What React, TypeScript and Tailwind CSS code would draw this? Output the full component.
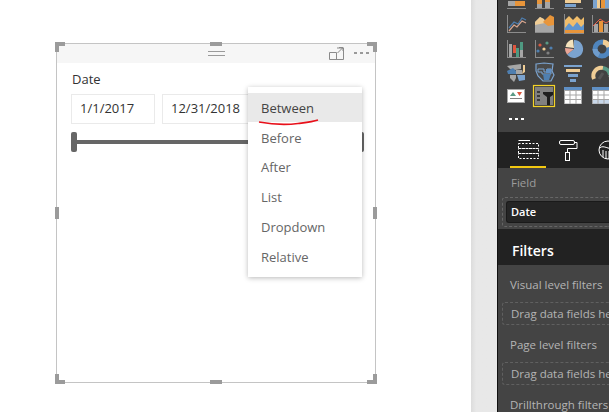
import type { ReactNode } from 'react'

const font = "[font-family:'Open_Sans','Noto_Sans',sans-serif]"

function Cell({ children }: { children: ReactNode }) {
  return (
    <svg width="20" height="20" viewBox="0 0 20 20" className="block overflow-visible">
      {children}
    </svg>
  )
}

function Axes({ full }: { full?: boolean }) {
  return (
    <>
      <rect x="0" y="18" width="19" height="1" fill="#8c8c8c" />
      {full && <rect x="0" y="1" width="1" height="18" fill="#8c8c8c" />}
    </>
  )
}

const galleryIcons: ReactNode[] = [
  // stacked bar
  <>
    <rect x="1" y="11" width="7" height="5" fill="#a6a6a6" />
    <rect x="8" y="11" width="10" height="5" fill="#e8953a" />
    <Axes />
  </>,
  // stacked column
  <>
    <rect x="2" y="10" width="5" height="4" fill="#e8953a" />
    <rect x="2" y="14" width="5" height="4" fill="#a6a6a6" />
    <rect x="10" y="8" width="5" height="4" fill="#e8953a" />
    <rect x="10" y="12" width="5" height="6" fill="#a6a6a6" />
    <Axes />
  </>,
  // clustered bar
  <>
    <rect x="1" y="10" width="16" height="3" fill="#f0cd95" />
    <rect x="1" y="14" width="11" height="3" fill="#7ba3cf" />
    <Axes />
  </>,
  // 100% column
  <>
    <rect x="1" y="8" width="4" height="10" fill="#7ba3cf" />
    <rect x="5" y="8" width="3" height="10" fill="#f0cd95" />
    <rect x="9" y="8" width="4" height="10" fill="#e8953a" />
    <rect x="13" y="8" width="4" height="10" fill="#7ba3cf" />
    <Axes />
  </>,
  // line
  <>
    <path d="M2 17L7 11L10 13L15 7L19 9" fill="none" stroke="#d7a58e" strokeWidth="1.2" />
    <path d="M2 14L7 8L11 10L15 4L19 6" fill="none" stroke="#4f7fb0" strokeWidth="1.2" />
    <Axes full />
  </>,
  // area
  <>
    <path d="M0 18V8L5 3L10 6L19 8V18Z" fill="#a6a6a6" />
    <path d="M0 8L5 3L9 5L10 9L0 11Z" fill="#f0cd95" />
    <path d="M8 8L15 1L19 3V11L13 12Z" fill="#e8953a" />
    <rect x="0" y="18" width="19" height="1" fill="#8c8c8c" />
  </>,
  // stacked area
  <>
    <path d="M1 19V6L5 2L9 6L13 2L17 6L20 3V19Z" fill="#f0bd6b" />
    <path d="M1 14L5 9L9 13L13 8L17 13L20 10V16H1Z" fill="#5f95cf" />
    <path d="M1 16H20V19H1Z" fill="#e8953a" />
    <rect x="0" y="0" width="1" height="20" fill="#8c8c8c" />
    <rect x="0" y="19" width="20" height="1" fill="#8c8c8c" />
  </>,
  // combo
  <>
    <rect x="2" y="10" width="4" height="8" fill="#a6a6a6" />
    <rect x="7" y="7" width="4" height="11" fill="#e8953a" />
    <rect x="12" y="10" width="4" height="8" fill="#a6a6a6" />
    <rect x="17" y="4" width="3" height="14" fill="#e8953a" />
    <path d="M1 12L8 5L14 9L19 6" fill="none" stroke="#e9604a" strokeWidth="1" />
    <Axes full />
  </>,
  // ribbon
  <>
    <rect x="2" y="5" width="3" height="13" fill="#a6a6a6" />
    <rect x="13" y="3" width="3" height="15" fill="#a6a6a6" />
    <rect x="6" y="6" width="3" height="8" fill="#e0573f" />
    <rect x="9" y="9" width="3" height="9" fill="#4f9a82" />
    <rect x="13" y="3" width="3" height="8" fill="#4f9a82" />
    <Axes full />
  </>,
  // scatter
  <>
    <circle cx="5" cy="6" r="1.6" fill="#d9583f" />
    <circle cx="12" cy="4" r="1.6" fill="#5a9a85" />
    <circle cx="3" cy="12" r="1.6" fill="#4f7fb0" />
    <circle cx="9" cy="10" r="1.6" fill="#f0cd95" />
    <circle cx="16" cy="9" r="1.6" fill="#4f7fb0" />
    <circle cx="13" cy="14" r="1.6" fill="#808080" />
    <Axes full />
  </>,
  // pie
  <>
    <path d="M10 10V1A9 9 0 1 1 3 15.5Z" fill="#7ba3cf" />
    <path d="M10 10L3 15.5A9 9 0 0 1 1 9Z" fill="#e9a596" />
    <path d="M10 9L1.5 8A9 9 0 0 1 9 0.5Z" fill="#f5e3bd" />
  </>,
  // donut
  <>
    <circle cx="10" cy="10" r="7" fill="none" stroke="#4f85bd" strokeWidth="5" />
    <path d="M11 3A7 7 0 0 1 17 8" fill="none" stroke="#f0cd95" strokeWidth="5" />
    <path d="M3 10A7 7 0 0 0 7 16" fill="none" stroke="#6f9ccc" strokeWidth="5" />
  </>,
  // map
  <>
    <path d="M0 3L14 1V6L8 7L3 6Z" fill="#a6a6a6" />
    <path d="M0 8L6 5L9 8V11H1Z" fill="#4f7fb0" />
    <path d="M9 7H15V11H9Z" fill="#a6a6a6" />
    <path d="M3 12H9V15L7 19L3 15Z" fill="#a6a6a6" />
    <path d="M10 12H18V17L12 18Z" fill="#7ba3cf" />
    <path d="M16 2H18V9L15 11L16 7Z" fill="#f0cd95" />
  </>,
  // filled map
  <>
    <path d="M1 1L9 0L18 1L17 8L19 12L16 18L8 18L3 13L1 8Z" fill="#4a4a4a" stroke="#7ba3cf" strokeWidth="1.2" />
    <path d="M3 6H9V9H12V6H16V11H7V9H3Z" fill="none" stroke="#7ba3cf" />
    <path d="M8 11H16L14 17H9Z" fill="#4f7fb0" />
    <rect x="11" y="6" width="5" height="4" fill="#5f8fc4" />
  </>,
  // funnel
  <>
    <rect x="0" y="2" width="18" height="2" fill="#7ba3cf" />
    <rect x="2" y="6" width="14" height="3" fill="#f0cd95" />
    <rect x="4" y="11" width="10" height="3" fill="#7ba3cf" />
    <rect x="6" y="16" width="6" height="3" fill="#7ba3cf" />
  </>,
  // gauge
  <>
    <path d="M2 16A8 8 0 0 1 11 5" fill="none" stroke="#f0cd95" strokeWidth="4" />
    <path d="M11 5A8 8 0 0 1 18 12" fill="none" stroke="#5a9a85" strokeWidth="4" />
    <path d="M18 12L20 16" stroke="#8c8c8c" strokeWidth="4" />
    <path d="M7 16L11 10" stroke="#555555" strokeWidth="3" />
  </>,
  // card
  <>
    <rect x="0.500" y="2.500" width="17" height="13" fill="#ffffff" stroke="#a6a6a6" />
    <path d="M3 9L6 5L9 9Z" fill="#5a9a85" />
    <path d="M10 5H15L12.500 9Z" fill="#d9583f" />
    <rect x="3" y="11" width="12" height="1" fill="#808080" />
  </>,
  // slicer, selected in the gallery
  <>
    <rect x="-1.500" y="-1.500" width="21" height="21" fill="#3f3f3f" stroke="#f5d327" strokeWidth="1.200" />
    <rect x="0" y="0" width="18" height="18" fill="#808080" />
    <rect x="2" y="4" width="3" height="2" fill="#3a3a3a" />
    <rect x="2" y="8" width="3" height="2" fill="#3a3a3a" />
    <rect x="2" y="12" width="3" height="2" fill="#3a3a3a" />
    <path d="M8 5H18V8L15 10V18H12V10L8 7Z" fill="#1d1d1d" />
  </>,
  // table
  <>
    <rect x="0" y="0" width="18" height="3" fill="#5f8fc4" />
    <rect x="0" y="3" width="18" height="14" fill="#a6a6a6" />
    <rect x="1" y="4" width="4.500" height="3.500" fill="#ffffff" />
    <rect x="6.500" y="4" width="5" height="3.500" fill="#ffffff" />
    <rect x="12.500" y="4" width="4.500" height="3.500" fill="#ffffff" />
    <rect x="1" y="8.500" width="4.500" height="3.500" fill="#ffffff" />
    <rect x="6.500" y="8.500" width="5" height="3.500" fill="#ffffff" />
    <rect x="12.500" y="8.500" width="4.500" height="3.500" fill="#ffffff" />
    <rect x="1" y="13" width="4.500" height="3.500" fill="#ffffff" />
    <rect x="6.500" y="13" width="5" height="3.500" fill="#ffffff" />
    <rect x="12.500" y="13" width="4.500" height="3.500" fill="#ffffff" />
  </>,
  // matrix
  <>
    <rect x="0" y="0" width="18" height="3" fill="#5f8fc4" />
    <rect x="0" y="3" width="18" height="14" fill="#a6a6a6" />
    <rect x="1" y="4" width="4.500" height="3.500" fill="#ffffff" />
    <rect x="6.500" y="4" width="5" height="3.500" fill="#ffffff" />
    <rect x="12.500" y="4" width="4.500" height="3.500" fill="#ffffff" />
    <rect x="1" y="8.500" width="4.500" height="3.500" fill="#ffffff" />
    <rect x="6.500" y="8.500" width="5" height="3.500" fill="#ffffff" />
    <rect x="12.500" y="8.500" width="4.500" height="3.500" fill="#ffffff" />
    <rect x="1" y="13" width="4.500" height="3.500" fill="#c9d8ea" />
    <rect x="6.500" y="13" width="5" height="3.500" fill="#c9d8ea" />
    <rect x="12.500" y="13" width="4.500" height="3.500" fill="#c9d8ea" />
  </>,
]

function FieldsIcon() {
  return (
    <svg width="21" height="20" viewBox="0 0 21 20" fill="none" stroke="#ffffff" strokeWidth="1" className="shrink-0">
      <path d="M0.500 0.500H12" />
      <rect x="0.500" y="3.500" width="20" height="5" strokeDasharray="2 1.500" />
      <rect x="0.500" y="8.500" width="20" height="5" strokeDasharray="2 1.500" />
      <rect x="0.500" y="13.500" width="20" height="5" strokeDasharray="2 1.500" />
    </svg>
  )
}

function RollerIcon() {
  return (
    <svg width="19" height="21" viewBox="0 0 19 21" fill="none" stroke="#ffffff" strokeWidth="1" className="shrink-0">
      <rect x="0.500" y="0.500" width="15" height="4" rx="1.500" />
      <path d="M15.500 2.500H18V8.500H8.500V12" />
      <rect x="6.500" y="12.500" width="4" height="8" />
    </svg>
  )
}

function AnalyticsIcon() {
  return (
    <svg width="20" height="20" viewBox="0 0 20 20" fill="none" stroke="#ffffff" strokeWidth="1" className="shrink-0">
      <circle cx="10" cy="10" r="9" />
      <path d="M1.500 8C6 4 11 11 18.500 8" />
      <path d="M5 10V17M8 11V19M11 11V19M14 10V17" />
    </svg>
  )
}

function Handle({ className }: { className: string }) {
  return <div className={`absolute bg-[#9b9b9b] ${className}`} />
}

function Corner({ className, h, v }: { className: string; h: string; v: string }) {
  return (
    <div className={`absolute h-[10px] w-[10px] ${className}`}>
      <div className={`absolute h-[4px] w-[10px] bg-[#9b9b9b] ${h}`} />
      <div className={`absolute h-[10px] w-[4px] bg-[#9b9b9b] ${v}`} />
    </div>
  )
}

function DateBox({ value, className }: { value: string; className: string }) {
  return (
    <div className={`flex h-[30px] items-center border border-[#eaeaea] pl-[8px] text-[13px] text-[#333333] ${className}`}>
      {value}
    </div>
  )
}

function DropZone() {
  return (
    <div className="mt-[7px] flex h-[23px] items-center overflow-hidden whitespace-nowrap rounded-l-[3px] border border-r-0 border-dashed border-[#606060] pl-[8px] text-[11.500px] text-[#b4b4b4]">
      Drag data fields here
    </div>
  )
}

const menuItems = ['Before', 'After', 'List', 'Dropdown', 'Relative']

export default function App() {
  return (
    <div className={`flex h-[412px] w-[609px] overflow-hidden bg-white ${font}`}>
      {/* Report canvas */}
      <div className="w-[471px] shrink-0 pl-[56px] pt-[43px]">
        <div className="relative h-[340px] w-[320px] border border-[#c4c4c4]">
          <Corner className="-left-[2px] -top-[2px]" h="left-0 top-0" v="left-0 top-0" />
          <Corner className="-right-[2px] -top-[2px]" h="right-0 top-0" v="right-0 top-0" />
          <Corner className="-bottom-[2px] -left-[2px]" h="bottom-0 left-0" v="bottom-0 left-0" />
          <Corner className="-bottom-[2px] -right-[2px]" h="bottom-0 right-0" v="bottom-0 right-0" />
          <Handle className="-top-[2px] left-[153px] h-[4px] w-[12px]" />
          <Handle className="-bottom-[2px] left-[153px] h-[4px] w-[12px]" />
          <Handle className="-left-[2px] top-[163px] h-[12px] w-[4px]" />
          <Handle className="-right-[2px] top-[163px] h-[12px] w-[4px]" />

          {/* Visual header */}
          <div className="flex h-[19px] items-center justify-center bg-[#f6f6f6]">
            <div className="flex w-[17px] flex-col gap-[3px]">
              <div className="h-px bg-[#9a9a9a]" />
              <div className="h-px bg-[#9a9a9a]" />
            </div>
          </div>
          <svg width="15" height="13" viewBox="0 0 15 13" fill="none" stroke="#8a8a8a" className="absolute left-[272px] top-[3px]">
            <path d="M0.500 5.500V12.500H14.500V1H8M0.500 5.500H7.500V12.500M8.500 6L13.500 1M10 0.500H14M14 0.500V4" />
          </svg>
          <div className="absolute left-[297px] top-[8px] flex gap-[3px]">
            <div className="h-[2px] w-[3px] bg-[#999999]" />
            <div className="h-[2px] w-[3px] bg-[#999999]" />
            <div className="h-[2px] w-[3px] bg-[#999999]" />
          </div>

          {/* Slicer */}
          <div className="pl-[14px] pt-[6px]">
            <div className="pl-px text-[13px] leading-[20px] text-[#333333]">Date</div>
            <div className="mt-[5px] flex gap-[7px]">
              <DateBox value="1/1/2017" className="w-[84px]" />
              <DateBox value="12/31/2018" className="w-[100px]" />
            </div>
            <div className="mt-[8px] flex h-[20px] w-[293px] items-center">
              <div className="h-[20px] w-[6px] shrink-0 rounded-[2px] bg-[#666666]" />
              <div className="h-[4px] flex-1 bg-[#666666]" />
              <div className="h-[20px] w-[6px] shrink-0 rounded-[2px] bg-[#666666]" />
            </div>
          </div>

          {/* Slicer type menu */}
          <div className="absolute left-[191px] top-[43px] h-[190px] w-[114px] bg-white pt-[6px] shadow-[0_1px_5px_rgba(0,0,0,0.28)]">
            <div className="flex h-[29px] items-center bg-[#e9e9e9] pl-[13px] pt-[2px] text-[13px] text-[#444444]">Between</div>
            <div className="pt-[1.500px]">
              {menuItems.map((item) => (
                <div key={item} className="flex h-[29.750px] items-center pl-[13px] text-[13px] text-[#666666]">
                  {item}
                </div>
              ))}
            </div>
          </div>
          <svg width="62" height="8" viewBox="0 0 62 8" fill="none" className="absolute left-[201px] top-[74px]">
            <path d="M1 4C12 6 28 7 40 5.500C48 4.500 54 4 60 2" stroke="#e8101a" strokeWidth="1.600" />
          </svg>
        </div>
      </div>

      {/* Gap between canvas and pane */}
      <div className="w-[26px] shrink-0 bg-gradient-to-r from-[#dcdcdc] to-[#e8e8e8] to-[20%]" />

      {/* Visualizations pane */}
      <div className="w-[112px] shrink-0 border-l border-[#111111] bg-[#424242]">
        <div className="h-[132px] overflow-hidden">
          <div className="-mt-[10px] grid grid-cols-[repeat(4,20px)] gap-x-[8.300px] gap-y-[4.250px] pl-[9px]">
            {galleryIcons.map((icon, i) => (
              <Cell key={i}>{icon}</Cell>
            ))}
          </div>
          <div className="ml-[11px] mt-[11px] flex gap-[3px]">
            <div className="h-[2px] w-[3px] bg-white" />
            <div className="h-[2px] w-[3px] bg-white" />
            <div className="h-[2px] w-[3px] bg-white" />
          </div>
        </div>

        {/* Tabs */}
        <div className="h-[36px] bg-[#222222]">
          <div className="flex h-full">
            <div className="ml-[12px] flex h-full w-[36px] shrink-0 justify-center border-b-2 border-[#f2c811] pt-[8px]">
              <FieldsIcon />
            </div>
            <div className="ml-[13px] shrink-0 pt-[8px]">
              <RollerIcon />
            </div>
            <div className="ml-[20px] shrink-0 pt-[8px]">
              <AnalyticsIcon />
            </div>
          </div>
        </div>

        {/* Field well */}
        <div className="h-[61px] bg-[#444444] pl-[4px] pt-[5px]">
          <div className="pl-[9px] text-[11.500px] leading-[20px] text-[#9c9c9c]">Field</div>
          <div className="mt-[4px] h-[30px] rounded-l-[3px] border border-r-0 border-dashed border-[#666666] py-[3px] pl-[3px]">
            <div className="flex h-[22px] items-center rounded-l-[3px] border border-r-0 border-[#1a1a1a] bg-[#252525] pl-[4px] text-[11px] font-semibold text-white">
              Date
            </div>
          </div>
        </div>

        {/* Filters */}
        <div className="flex h-[36px] items-center bg-[#222222] pl-[14px] pt-[6px] text-[14px] font-semibold text-white">Filters</div>
        <div className="whitespace-nowrap bg-[#444444] pl-[4px] pt-[10px]">
          <div className="pl-[8px] text-[11.500px] leading-[20px] text-[#b4b4b4]">Visual level filters</div>
          <DropZone />
          <div className="mt-[10px] pl-[8px] text-[11.500px] leading-[20px] text-[#b4b4b4]">Page level filters</div>
          <DropZone />
          <div className="mt-[10px] pl-[8px] text-[11.500px] leading-[20px] text-[#b4b4b4]">Drillthrough filters</div>
          <div className="h-[10px]" />
        </div>
      </div>
    </div>
  )
}
